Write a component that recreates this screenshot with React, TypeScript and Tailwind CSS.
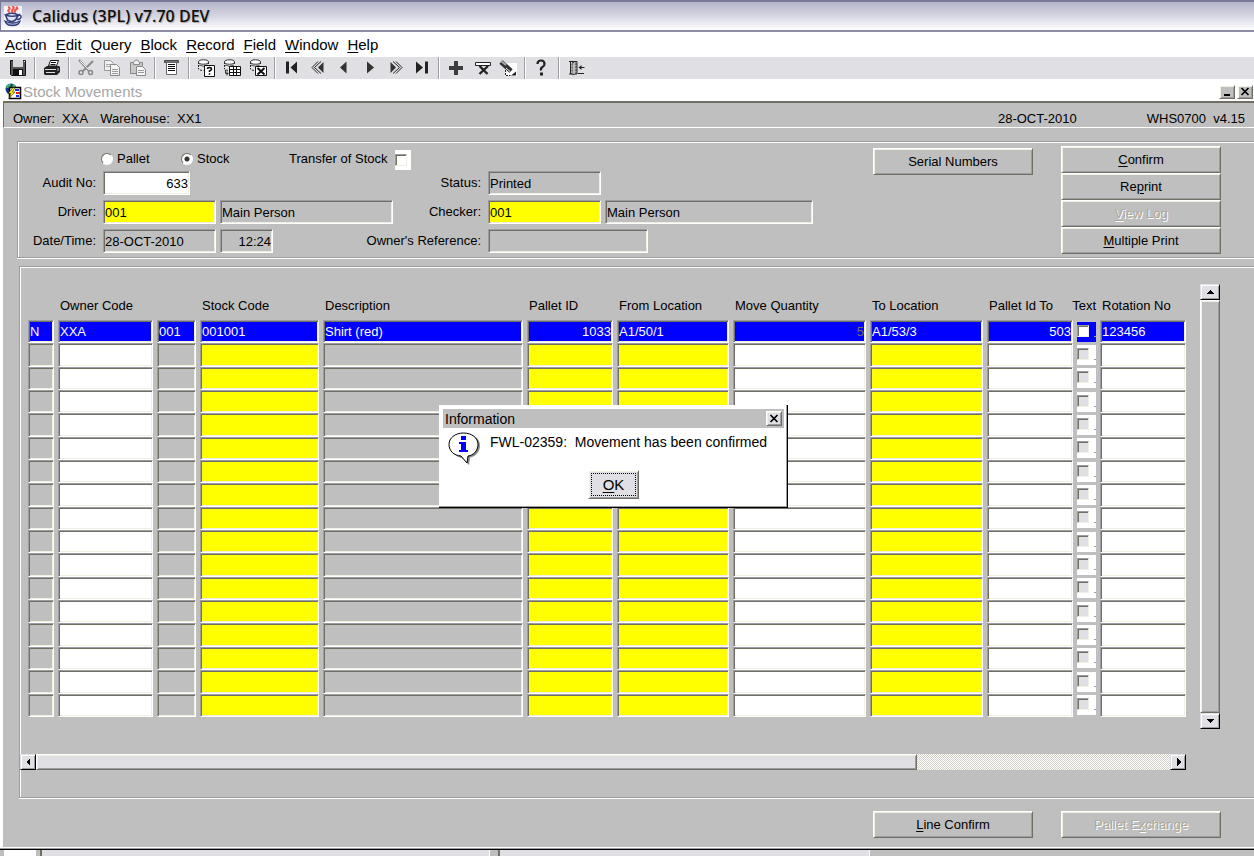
import { useState, type ReactNode } from "react";

const SUNKEN =
  "border border-t-[#9d9da1] border-l-[#9d9da1] border-r-white border-b-white shadow-[inset_1px_1px_0_#716f64,inset_-1px_-1px_0_#f1efe2]";
const RAISED =
  "border border-t-white border-l-white border-r-[#716f64] border-b-[#716f64] shadow-[inset_1px_1px_0_#f1efe2,inset_-1px_-1px_0_#9d9da1]";
const ARROW =
  "flex items-center justify-center bg-[#e0dfe3] border border-t-[#e0dfe3] border-l-[#e0dfe3] border-r-black border-b-black shadow-[inset_1px_1px_0_#fff,inset_-1px_-1px_0_#9d9da1]";
const GROUP =
  "border-t border-l border-b border-[#9d9da1] shadow-[inset_1px_1px_0_#fff,0_1px_0_#fff]";

const MENUS = ["Action", "Edit", "Query", "Block", "Record", "Field", "Window", "Help"];

interface Column {
  label: string;
  width: string;
  fill: string;
  value: string;
  right?: boolean;
  check?: boolean;
  dim?: boolean;
}

const COLUMNS: Column[] = [
  { label: "", width: "w-[26px]", fill: "bg-[#bfbfbf]", value: "N" },
  { label: "Owner Code", width: "w-[95px]", fill: "bg-white", value: "XXA" },
  { label: "", width: "w-[39px]", fill: "bg-[#bfbfbf]", value: "001" },
  { label: "Stock Code", width: "w-[119px]", fill: "bg-[#ffff00]", value: "001001" },
  { label: "Description", width: "w-[200px]", fill: "bg-[#bfbfbf]", value: "Shirt (red)" },
  { label: "Pallet ID", width: "w-[86px]", fill: "bg-[#ffff00]", value: "1033", right: true },
  { label: "From Location", width: "w-[112px]", fill: "bg-[#ffff00]", value: "A1/50/1" },
  { label: "Move Quantity", width: "w-[133px]", fill: "bg-white", value: "5", right: true, dim: true },
  { label: "To Location", width: "w-[113px]", fill: "bg-[#ffff00]", value: "A1/53/3" },
  { label: "Pallet Id To", width: "w-[86px]", fill: "bg-white", value: "503", right: true },
  { label: "Text", width: "w-[19px]", fill: "bg-white", value: "", check: true },
  { label: "Rotation No", width: "w-[86px]", fill: "bg-white", value: "123456" },
];

const ROWS = Array.from({ length: 17 }, (_, i) => i);

// Label with one underlined access key
function Mnemonic({ text, at = 0 }: { text: string; at?: number }) {
  return (
    <span>
      {text.slice(0, at)}
      <span className="underline underline-offset-2">{text[at]}</span>
      {text.slice(at + 1)}
    </span>
  );
}

function FormButton({
  children,
  disabled,
}: {
  children: ReactNode;
  disabled?: boolean;
}) {
  return (
    <button
      type="button"
      disabled={disabled}
      className={`flex h-[27px] w-40 items-center justify-center bg-[#bfbfbf] ${RAISED} ${
        disabled ? "text-[#aca899] [text-shadow:1px_1px_0_#fff]" : ""
      }`}
    >
      {children}
    </button>
  );
}

function Field({
  id,
  label,
  value,
  className,
}: {
  id: string;
  label?: string;
  value: string;
  className: string;
}) {
  return (
    <input
      id={id}
      aria-label={label}
      defaultValue={value}
      className={`h-6 px-px outline-none ${SUNKEN} ${className}`}
    />
  );
}

function FieldLabel({ htmlFor, children }: { htmlFor: string; children: ReactNode }) {
  return (
    <label htmlFor={htmlFor} className="flex justify-end pr-px whitespace-nowrap">
      {children}
    </label>
  );
}

function CheckBox({ id, label, className }: { id?: string; label?: string; className: string }) {
  return (
    <input
      id={id}
      type="checkbox"
      aria-label={label}
      className={`block h-3 w-3 shrink-0 appearance-none border border-t-[#9d9da1] border-l-[#9d9da1] border-r-[#f1efe2] border-b-[#f1efe2] shadow-[inset_1px_1px_0_#716f64] checked:bg-[#716f64] ${className}`}
    />
  );
}

function Arrow({ d }: { d: string }) {
  return (
    <svg width="8" height="8" viewBox="0 0 8 8" shapeRendering="crispEdges">
      <path d={d} fill="#000" />
    </svg>
  );
}

function Cross() {
  return (
    <svg width="10" height="9" viewBox="0 0 10 9">
      <path d="M1.500 1l7 7M8.500 1l-7 7" stroke="#000" strokeWidth="1.700" />
    </svg>
  );
}

function JavaIcon() {
  return (
    <svg width="18" height="21" viewBox="0 0 18 21" className="shrink-0">
      <rect width="18" height="21" fill="#f4f4fa" />
      <path
        d="M4 1q3 1 1 2.500t1 3M8 0q3 1.500 1 3t0 4M12 1q3 1 0 2.500t0 3"
        fill="none"
        stroke="#f0584c"
        strokeWidth="2"
      />
      <path d="M1.500 9l2 5q4 3 8 0l3-5q-6 2.500-13 0z" fill="#dfe3f6" stroke="#34407e" strokeWidth="1.600" />
      <path d="M1.500 9q6-3.500 13 0" fill="none" stroke="#34407e" strokeWidth="1.600" />
      <path d="M14 9.500q3.500-1 3 1.500t-4.500 2.500" fill="none" stroke="#34407e" strokeWidth="1.500" />
      <path d="M1 15q1 4.500 7.500 4.500T16 15q-7.500 4-15 0z" fill="#a4add8" stroke="#34407e" strokeWidth="1.300" />
    </svg>
  );
}

function FormIcon() {
  return (
    <svg width="17" height="17" viewBox="0 0 17 17" className="shrink-0">
      <circle cx="6" cy="6" r="5.500" fill="#123a8c" />
      <path d="M2 2q3-2 4 0l-2 3H1zM8 1l3 2-1 2-3-1z" fill="#3fb56b" />
      <path d="M4.500 4.500h11v11h-11z" fill="#fff" stroke="#000" strokeWidth="1.500" />
      <path d="M10 6h4v2h-4zM11 12h3v2h-3z" fill="#1c2fd0" />
      <path d="M11 9h4v2h-4z" fill="#e02020" />
      <path d="M8 4.500l-5 6h3l-2 5 6-6.500H7.500l2.500-4.500z" fill="#ffee00" stroke="#000" strokeWidth=".500" />
    </svg>
  );
}

const CYLINDER = (
  <>
    <path d="M1.500 3v7q4 3 10 0V3z" fill="#e6e6e6" />
    <path d="M1.500 3v7q1.500 1.500 5 1.500M11.500 3v3" fill="none" stroke="#222" strokeDasharray="2 1" />
    <ellipse cx="6.500" cy="3" rx="5" ry="2.200" fill="#fff" stroke="#333" />
    <path d="M2 6q4.500 2.500 9 0" fill="none" stroke="#555" />
  </>
);

const TOOL_ICONS: Record<string, ReactNode> = {
  Save: (
    <>
      <path d="M1.500 1.500h15v15h-14l-1-1z" fill="#555" stroke="#111" />
      <path d="M4 1h10v7H4z" fill="#d8d8d8" />
      <path d="M4 10h10v7H4z" fill="#111" />
      <path d="M10 11h3v5h-3zM15 2h1v1h-1z" fill="#fff" />
    </>
  ),
  Print: (
    <>
      <path d="M5.500 7l2-5.500h8l-2 5.500z" fill="#fff" stroke="#111" />
      <path d="M8 3.500h5M7.500 5.500h5" stroke="#111" />
      <path d="M1 9l3-2h12l1 1v5l-3 3H2l-1-1z" fill="#222" />
      <path d="M2 10.500h11M3 13.500h9" stroke="#ddd" />
      <path d="M15 9v3" stroke="#bbb" />
    </>
  ),
  Cut: (
    <>
      <path d="M2 1l10 11M16 2L6 12" stroke="#8a8a8a" strokeWidth="2" />
      <path d="M3 2l9 9" stroke="#eee" />
      <circle cx="4" cy="13.500" r="2" fill="none" stroke="#888" strokeWidth="1.500" />
      <circle cx="13.500" cy="13.500" r="2" fill="none" stroke="#888" strokeWidth="1.500" />
    </>
  ),
  Copy: (
    <>
      <path d="M1.500 1.500h6l3 3v7h-9z" fill="#f0f0f0" stroke="#999" />
      <path d="M3 5.500h5M3 7.500h5" stroke="#aaa" />
      <path d="M7.500 5.500h6l3 3v8h-9z" fill="#f4f4f4" stroke="#888" />
      <path d="M9 10.500h6M9 12.500h6M9 14.500h6" stroke="#999" />
    </>
  ),
  Paste: (
    <>
      <path d="M1.500 3.500h12v11h-12z" fill="#c8c8c8" stroke="#888" />
      <path d="M4.500 3.500l2-2.500h2l2 2.500v2h-6z" fill="#eee" stroke="#888" />
      <path d="M7.500 7.500h6l3 3v6h-9z" fill="#f6f6f6" stroke="#888" />
      <path d="M9 11.500h6M9 13.500h6" stroke="#999" />
    </>
  ),
  List: (
    <>
      <path d="M1.500 1.500h14v2h-14z" fill="#777" stroke="#444" />
      <path d="M3.500 3.500h10v12h-10z" fill="#fff" stroke="#666" />
      <path d="M5 5.500h7M5 7.500h7M5 9.500h7M5 11.500h7" stroke="#111" />
    </>
  ),
  "Enter Query": (
    <>
      {CYLINDER}
      <path d="M7.500 6.500h10v11h-10z" fill="#fff" stroke="#111" />
      <path d="M10.500 10q0-1.500 2-1.500t2 1.500q0 1-2 2v1M12.500 14.200v1.600" fill="none" stroke="#111" strokeWidth="1.600" />
    </>
  ),
  "Execute Query": (
    <>
      {CYLINDER}
      <path d="M6.500 7.500h11v9h-11z" fill="#fff" stroke="#111" />
      <path d="M7 10.500h10M7 13.500h10M10.500 8v8M13.500 8v8" stroke="#111" />
      <path d="M2.500 11v3.500h3M4 12.500v4" fill="none" stroke="#333" />
    </>
  ),
  "Cancel Query": (
    <>
      {CYLINDER}
      <path d="M6.500 7.500h11v9h-11z" fill="#fff" stroke="#111" />
      <path d="M8.500 9l7 6.500M15.500 9l-7 6.500" stroke="#111" strokeWidth="2" />
    </>
  ),
  "First Record": <path d="M3 2.500h3v12H3zM14 2.500v12L7.500 8.500z" fill="#222" />,
  "Previous Block": (
    <>
      <path d="M14.500 3v11L9 8.500z" fill="#333" />
      <path d="M12 2.500l-6.500 6 6.500 6M9 2.500l-6 6 6 6" fill="none" stroke="#222" />
    </>
  ),
  "Previous Record": <path d="M11.500 2.500v12L5 8.500z" fill="#333" />,
  "Next Record": <path d="M6 2.500v12l7-6z" fill="#333" />,
  "Next Block": (
    <>
      <path d="M3.500 3v11L9 8.500z" fill="#333" />
      <path d="M6 2.500l6.500 6-6.500 6M9 2.500l6 6-6 6" fill="none" stroke="#222" />
    </>
  ),
  "Last Record": <path d="M3 2.500v12l7-6zM12 2.500h3v12h-3z" fill="#222" />,
  "Insert Record": <path d="M7 2h4v5h5v4h-5v5H7v-5H2V7h5z" fill="#3c3c3c" />,
  "Delete Record": (
    <>
      <path d="M2.500 3.500h15v3h-15z" fill="#fff" stroke="#222" />
      <path d="M6.500 7l8 8M15 7l-8.500 8" stroke="#222" strokeWidth="2.400" />
    </>
  ),
  "Clear Record": (
    <>
      <path d="M6 4h12v13H6z" fill="#fff" />
      <path d="M6.500 11v5.500h5" fill="none" stroke="#222" strokeDasharray="2 1" />
      <path d="M2 3l10 9" stroke="#333" strokeWidth="5" />
      <path d="M2 2l5 4" stroke="#aaa" strokeWidth="2" />
      <path d="M7 9l4 3.500" stroke="#eee" />
      <path d="M12 16.500h5v-4z" fill="#222" />
    </>
  ),
  Help: (
    <>
      <path d="M4.500 5Q4.500 1.500 8 1.500T11.500 5q0 2-2 3T8 11.500" fill="none" stroke="#222" strokeWidth="2.200" />
      <path d="M7 13.500h3v3H7z" fill="#222" />
    </>
  ),
  Exit: (
    <>
      <path d="M2 2.500h8V15H2M3.500 2v13" fill="none" stroke="#222" />
      <path d="M5 4l4-1.500v12L5 16z" fill="#bbb" stroke="#222" strokeDasharray="2 1" />
      <path d="M11 14.500h6M13 8.500h4.500" stroke="#222" />
      <path d="M11.500 8.500l3-2.500v5z" fill="#222" />
    </>
  ),
};

const TOOL_GROUPS = [
  ["Save"],
  ["Print"],
  ["Cut", "Copy", "Paste"],
  ["List"],
  ["Enter Query", "Execute Query", "Cancel Query"],
  ["First Record", "Previous Block", "Previous Record", "Next Record", "Next Block", "Last Record"],
  ["Insert Record", "Delete Record", "Clear Record"],
  ["Help"],
  ["Exit"],
];

function Toolbar() {
  return (
    <div className="flex h-[22px] items-center bg-[#e0dfe3] pl-[5px]">
      {TOOL_GROUPS.map((group, i) => (
        <div key={group[0]} className="flex h-full items-center">
          {i > 0 && (
            <div className="mx-[3px] h-full w-[2px] border-r border-l border-l-[#9d9da1] border-r-white" />
          )}
          {group.map((name) => (
            <button key={name} type="button" title={name} className="flex w-[26px] justify-center">
              <svg width="18" height="18" viewBox="0 0 18 18">
                {TOOL_ICONS[name]}
              </svg>
            </button>
          ))}
        </div>
      ))}
    </div>
  );
}

function MovementForm() {
  const [kind, setKind] = useState("stock");
  const radio =
    "h-3 w-3 appearance-none rounded-full border border-t-[#716f64] border-l-[#716f64] border-r-white border-b-white bg-white checked:bg-[radial-gradient(circle,#333_0_2px,#fff_3px)]";

  return (
    <form className="pt-[3px] pl-px">
      <div className="flex h-[22px] items-start pl-[82px]">
        <label className="flex w-20 items-center gap-1">
          <input type="radio" name="kind" className={radio} checked={kind === "pallet"} onChange={() => setKind("pallet")} />
          Pallet
        </label>
        <label className="flex w-[108px] items-center gap-1">
          <input type="radio" name="kind" className={radio} checked={kind === "stock"} onChange={() => setKind("stock")} />
          Stock
        </label>
        <label htmlFor="transfer">Transfer of Stock</label>
        <div className="mt-px ml-[7px] h-5 w-4 bg-white pt-1">
          <CheckBox id="transfer" className="bg-white" />
        </div>
      </div>
      <div className="grid grid-cols-[78px_290px_83px_325px] items-center gap-x-[6px] gap-y-[5px]">
        <FieldLabel htmlFor="audit">Audit No:</FieldLabel>
        <Field id="audit" value="633" className="w-[87px] bg-white text-right" />
        <FieldLabel htmlFor="status">Status:</FieldLabel>
        <Field id="status" value="Printed" className="w-[113px] bg-[#bfbfbf]" />

        <FieldLabel htmlFor="driver">Driver:</FieldLabel>
        <div className="flex gap-1">
          <Field id="driver" value="001" className="w-[113px] bg-[#ffff00]" />
          <Field id="driver-name" label="Driver name" value="Main Person" className="w-[173px] bg-[#bfbfbf]" />
        </div>
        <FieldLabel htmlFor="checker">Checker:</FieldLabel>
        <div className="flex gap-1">
          <Field id="checker" value="001" className="w-[113px] bg-[#ffff00]" />
          <Field id="checker-name" label="Checker name" value="Main Person" className="w-[208px] bg-[#bfbfbf]" />
        </div>

        <FieldLabel htmlFor="date">Date/Time:</FieldLabel>
        <div className="flex gap-1">
          <Field id="date" value="28-OCT-2010" className="w-[113px] bg-[#bfbfbf]" />
          <Field id="time" label="Time" value="12:24" className="w-[53px] bg-[#bfbfbf] text-right" />
        </div>
        <FieldLabel htmlFor="reference">Owner's Reference:</FieldLabel>
        <Field id="reference" value="" className="w-[160px] bg-[#bfbfbf]" />
      </div>
    </form>
  );
}

function LinesTable() {
  return (
    <table className="h-[449px] w-[1165px] table-fixed border-separate border-spacing-x-1 border-spacing-y-0">
      <thead>
        <tr className="h-[52px]">
          {COLUMNS.map((col, i) => (
            <th key={i} scope="col" className={`pb-1 align-bottom font-normal ${col.check ? "" : "pl-[2px]"} ${col.width}`}>
              <div className={`flex whitespace-nowrap ${col.check ? "justify-end" : ""}`}>{col.label}</div>
            </th>
          ))}
        </tr>
      </thead>
      <tbody>
        {ROWS.map((row) => (
          <tr key={row}>
            {COLUMNS.map((col, i) => {
              const current = row === 0;
              const fill = current ? "bg-[#0000ff]" : col.fill;
              if (col.check) {
                return (
                  <td key={i} className="p-0">
                    <div className={`flex h-5 items-end justify-between ${fill}`}>
                      <CheckBox
                        label={`Text, line ${row + 1}`}
                        className={`mb-[5px] ${current ? "bg-white" : "bg-[#e0dfe3]"}`}
                      />
                      <span className="mb-[5px] h-px w-[2px] bg-[#9d9da1]" />
                    </div>
                  </td>
                );
              }
              return (
                <td key={i} className={`p-0 ${SUNKEN} ${fill}`}>
                  <input
                    aria-label={`${col.label || "Code"}, line ${row + 1}`}
                    defaultValue={current ? col.value : ""}
                    className={`block h-[18px] w-full bg-transparent px-px outline-none ${
                      col.right ? "text-right" : ""
                    } ${col.dim ? "text-[#716f64]" : "text-white"}`}
                  />
                </td>
              );
            })}
          </tr>
        ))}
      </tbody>
    </table>
  );
}

function InfoDialog({ onClose }: { onClose: () => void }) {
  return (
    <div
      role="dialog"
      aria-label="Information"
      className="absolute top-[405px] left-[439px] h-[103px] w-[349px] border-r border-b border-black bg-white pt-1 pr-[3px] pl-1 text-[14px] shadow-[inset_-1px_-1px_0_#9d9da1]"
    >
      <div className="flex h-[19px] items-center justify-between bg-[#bfbfbf] pr-[2px] pl-[2px]">
        <h2>Information</h2>
        <button
          type="button"
          aria-label="Close"
          onClick={onClose}
          className={`flex h-[15px] w-4 items-center justify-center bg-[#e0dfe3] ${RAISED}`}
        >
          <Cross />
        </button>
      </div>
      <div className="flex h-[42px] pl-[5px]">
        <svg width="33" height="34" viewBox="0 0 33 34" className="mt-1 shrink-0">
          <path d="M18 2c8 0 14 5 14 11.500S27 25 22 25.500L21 33l-7-7C7 25 4 20 4 14z" fill="#888" />
          <path
            d="M15.500 1C24 1 30 6 30 12.500S25 23.500 20 24l-1 7-6-7C6 23.500 1 19 1 12.500S7 1 15.500 1z"
            fill="#fff"
            stroke="#000"
          />
          <path d="M13 4h5v4h-5zM11 10h7v8h2v2h-9v-2h2v-6h-2z" fill="#0000ff" />
        </svg>
        <p className="ml-[9px] pt-1 leading-5 whitespace-pre">FWL-02359:  Movement has been confirmed</p>
      </div>
      <div className="flex justify-center">
        <button
          type="button"
          onClick={onClose}
          className={`h-[29px] w-[51px] bg-[#e0dfe3] p-[2px] text-[15px] ${RAISED}`}
        >
          <span className="flex h-full items-center justify-center border border-dotted border-black">
            <Mnemonic text="OK" />
          </span>
        </button>
      </div>
    </div>
  );
}

export default function App() {
  const [dialogOpen, setDialogOpen] = useState(true);

  return (
    <div className="relative min-h-screen overflow-hidden bg-white font-['Liberation_Sans',Arial,sans-serif] text-[13px] leading-5 text-black">
      <header className="flex h-8 items-center gap-[10px] border-t-2 border-b-2 border-l border-t-[#77779a] border-b-[#8c8ca6] border-l-[#77779a] bg-linear-to-b from-[#b4b4ca] via-[#d6d6e2] to-white pl-[3px]">
        <JavaIcon />
        <h1 className="font-['Open_Sans',sans-serif] text-[16px] font-semibold text-[#111] [text-shadow:1px_1px_1px_#aaa]">
          Calidus (3PL) v7.70 DEV
        </h1>
      </header>

      <nav className="flex h-[25px] items-center gap-[9px] bg-white pl-[5px] text-[15px]">
        {MENUS.map((menu) => (
          <button key={menu} type="button">
            <Mnemonic text={menu} />
          </button>
        ))}
      </nav>

      <Toolbar />

      {/* Form window caption */}
      <div className="flex h-[22px] items-center pt-[3px] pr-px pl-[5px]">
        <FormIcon />
        <h2 className="ml-px text-[15px] text-[#a6a6a6]">Stock Movements</h2>
        <div className="ml-auto flex gap-[2px]">
          <button
            type="button"
            aria-label="Minimize"
            className={`flex h-[14px] w-4 items-end justify-center bg-[#bfbfbf] pb-[2px] ${RAISED}`}
          >
            <span className="h-[2px] w-[6px] bg-black" />
          </button>
          <button
            type="button"
            aria-label="Close form"
            className={`flex h-[14px] w-4 items-center justify-center bg-[#bfbfbf] ${RAISED}`}
          >
            <Cross />
          </button>
        </div>
      </div>

      <main className="ml-[3px] bg-[#bfbfbf] pb-[9px]">
        <div className="flex h-[27px] items-center border-t-2 border-b border-l border-t-[#716f64] border-b-white border-l-[#716f64] pt-[7px] pr-[9px] pl-[9px]">
          <span className="whitespace-pre">Owner:  XXA</span>
          <span className="ml-3 whitespace-pre">Warehouse:  XX1</span>
          <span className="mr-[70px] ml-auto">28-OCT-2010</span>
          <span className="whitespace-pre">WHS0700  v4.15</span>
        </div>

        <section className={`mt-[13px] ml-[14px] flex h-[117px] justify-between pt-1 pr-[33px] ${GROUP}`}>
          <MovementForm />
          <div className="flex items-start gap-7">
            <div className="pt-[2px]">
              <FormButton>Serial Numbers</FormButton>
            </div>
            <div className="flex flex-col">
              <FormButton>
                <Mnemonic text="Confirm" />
              </FormButton>
              <FormButton>
                <Mnemonic text="Reprint" at={2} />
              </FormButton>
              <FormButton disabled>
                <Mnemonic text="View Log" />
              </FormButton>
              <FormButton>
                <Mnemonic text="Multiple Print" />
              </FormButton>
            </div>
          </div>
        </section>

        <section className={`mt-2 ml-4 flex h-[532px] pt-px ${GROUP}`}>
          <div className="w-[1170px] shrink-0">
            <div className="pl-1">
              <LinesTable />
            </div>
            <div className="mt-[37px] mr-1 flex h-4 bg-[repeating-conic-gradient(#fff_0_25%,#d4d0c8_0_50%)] bg-[length:2px_2px]">
              <button type="button" aria-label="Scroll left" className={`w-4 ${ARROW}`}>
                <Arrow d="M6 0v8L2 4z" />
              </button>
              <div className={`w-[881px] bg-[#e0dfe3] ${RAISED}`} />
              <button type="button" aria-label="Scroll right" className={`ml-auto w-4 ${ARROW}`}>
                <Arrow d="M3 0v8l4-4z" />
              </button>
            </div>
          </div>
          <div className="mt-4 ml-[10px] flex h-[445px] w-5 flex-col">
            <button type="button" aria-label="Scroll up" className={`h-4 ${ARROW}`}>
              <Arrow d="M0 6h8L4 2z" />
            </button>
            <div className={`flex-1 ${RAISED}`} />
            <button type="button" aria-label="Scroll down" className={`h-4 ${ARROW}`}>
              <Arrow d="M0 2h8L4 6z" />
            </button>
          </div>
        </section>

        <div className="mt-[13px] flex justify-end gap-7 pr-[33px]">
          <FormButton>
            <Mnemonic text="Line Confirm" />
          </FormButton>
          <FormButton disabled>
            <Mnemonic text="Pallet Exchange" at={8} />
          </FormButton>
        </div>
      </main>

      <div className="h-[3px] border-t border-b border-t-white border-b-black bg-[#9d9da1]" />
      <footer className="flex h-[7px] bg-[#bfbfbf]">
        <div className="w-9 border-l-4 border-l-[#bfbfbf] bg-white" />
        <div className="ml-1 w-[450px] border-r border-l-2 border-r-white border-l-[#716f64] bg-[#e0dfe3]" />
        <div className="ml-2 w-[372px] border-r border-l-2 border-r-white border-l-[#716f64] bg-[#e0dfe3]" />
      </footer>

      {dialogOpen && <InfoDialog onClose={() => setDialogOpen(false)} />}
    </div>
  );
}
